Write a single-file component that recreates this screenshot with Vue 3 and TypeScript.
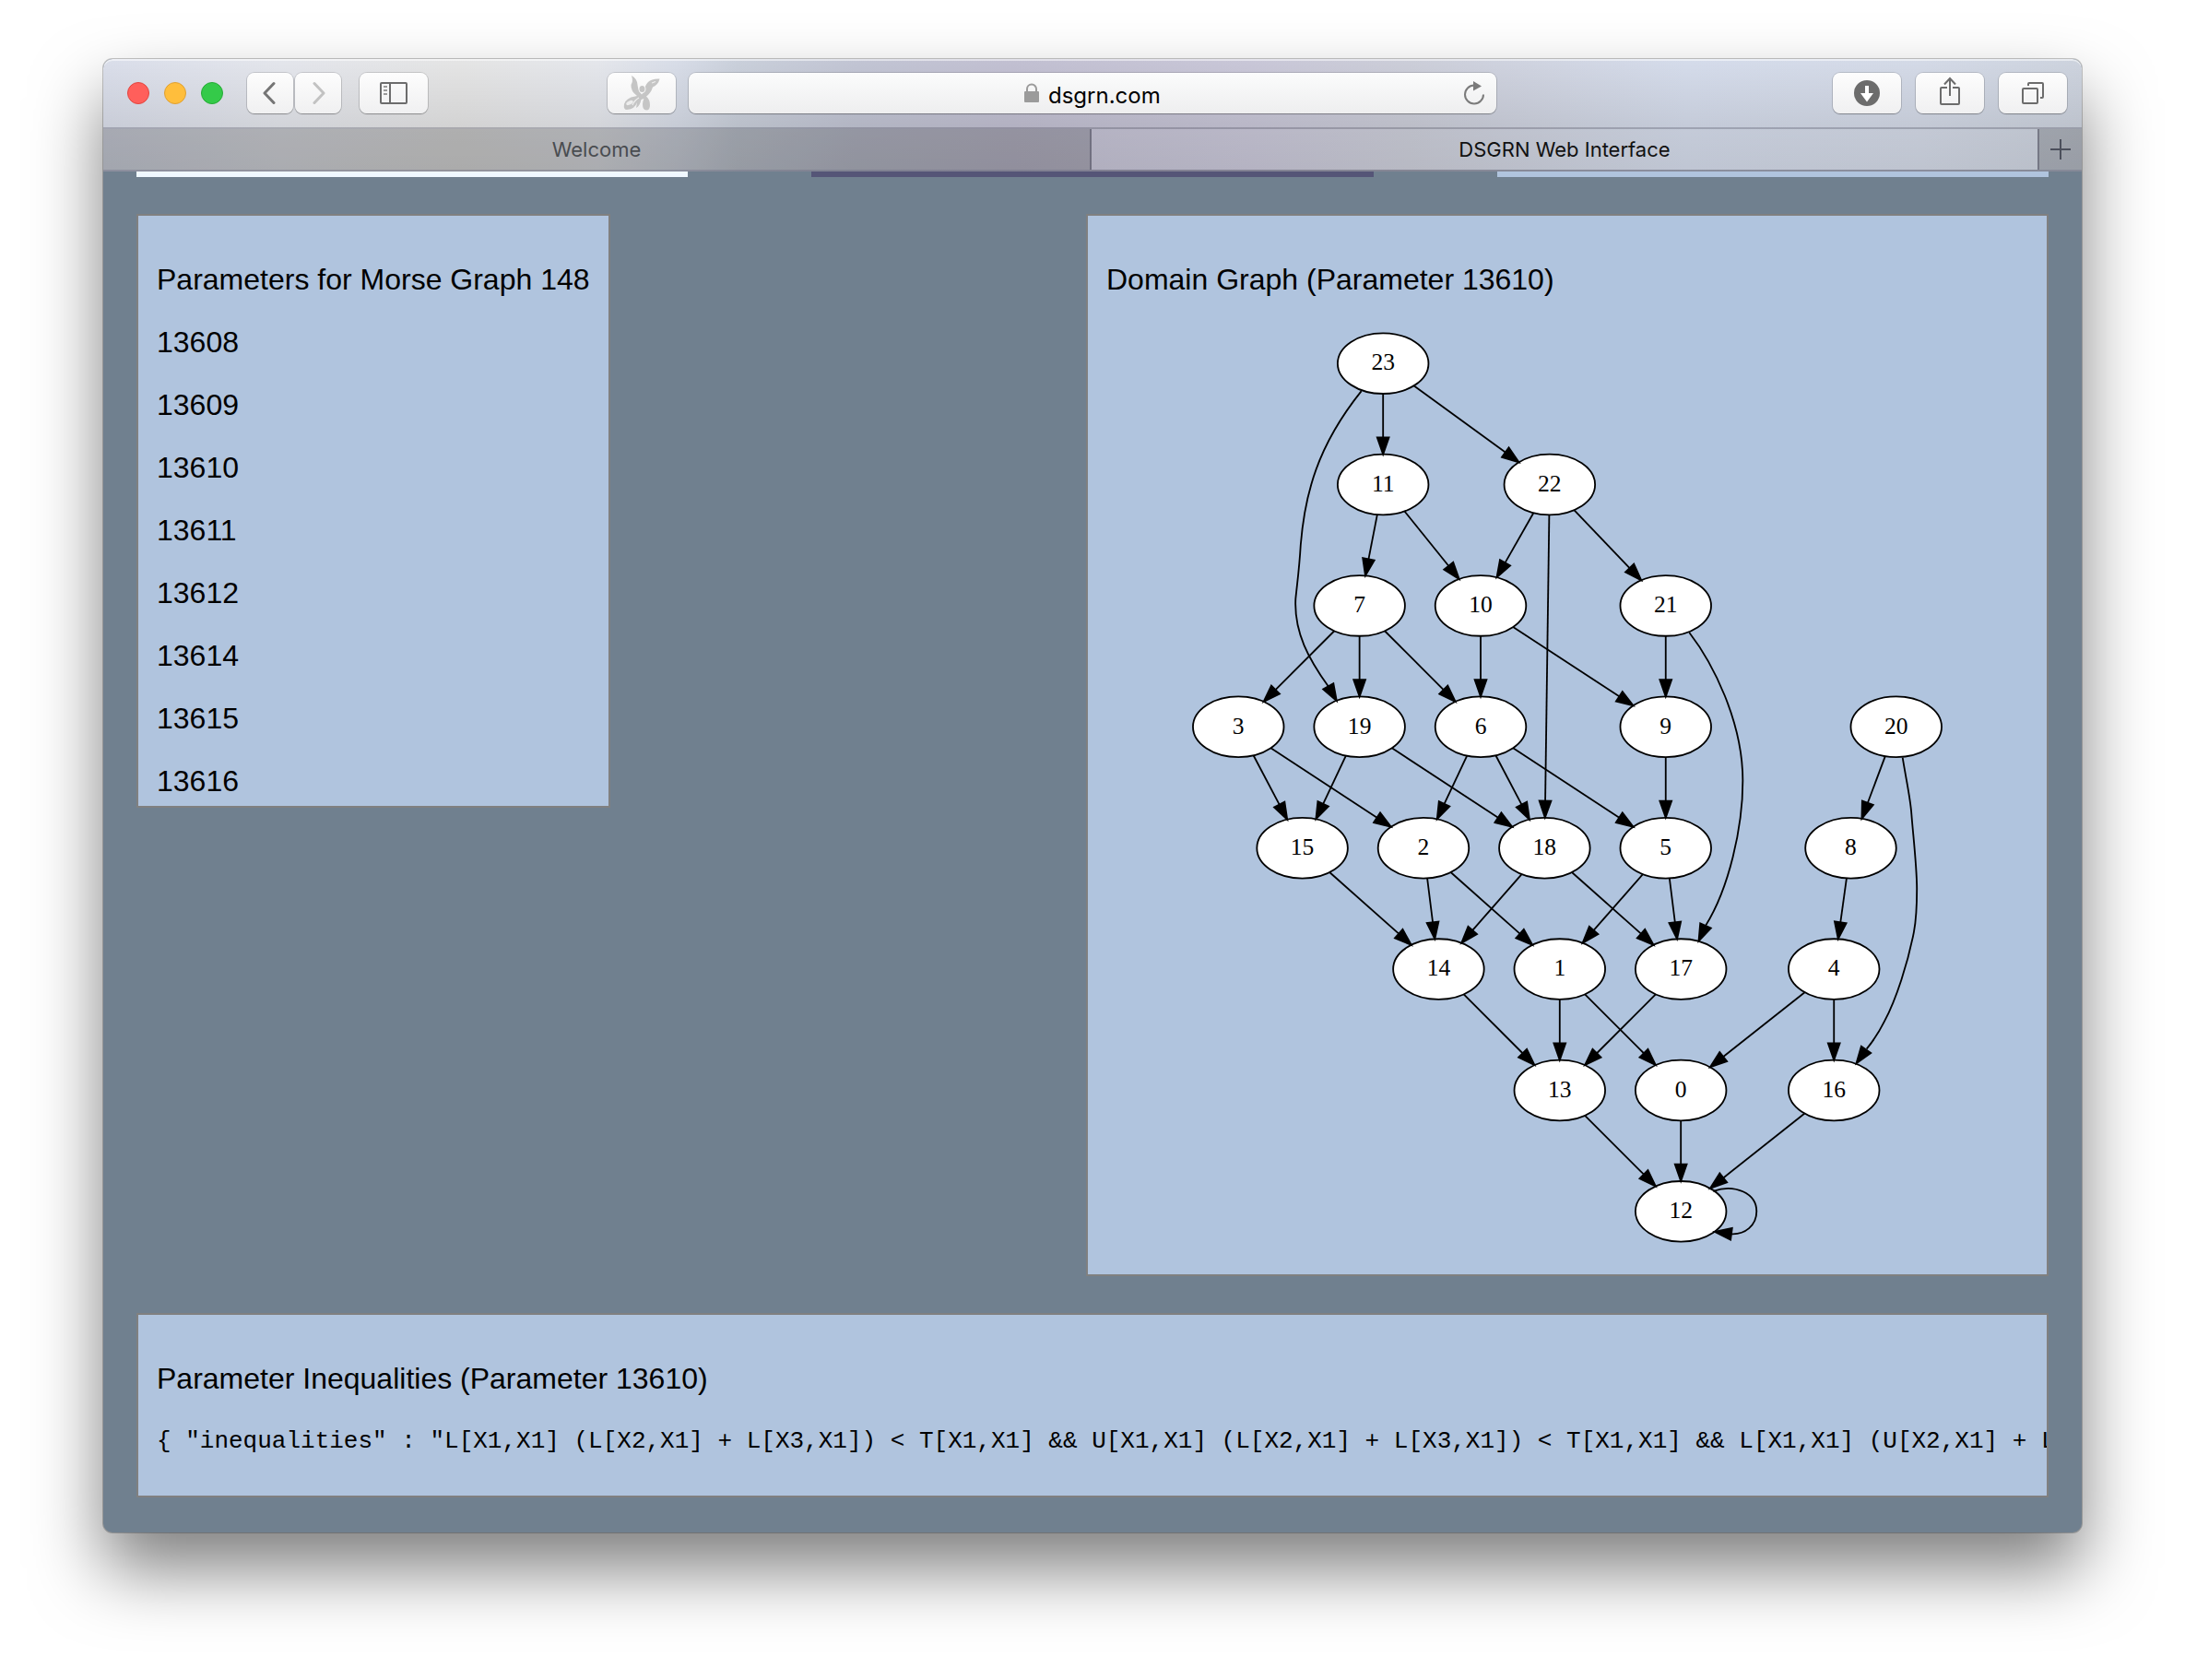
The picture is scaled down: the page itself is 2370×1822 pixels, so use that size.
<script setup lang="ts">
import { ref } from 'vue'

interface GraphNode {
  id: number
  x: number
  y: number
}

interface CurvedEdge {
  path: string
  base: [number, number]
  tip: [number, number]
}

const address = ref('dsgrn.com')
const parameters: number[] = [13608, 13609, 13610, 13611, 13612, 13614, 13615, 13616]
const inequalities =
  '{ "inequalities" : "L[X1,X1] (L[X2,X1] + L[X3,X1]) < T[X1,X1] && U[X1,X1] (L[X2,X1] + L[X3,X1]) < T[X1,X1] && L[X1,X1] (U[X2,X1] + L[X3,X1]) < T[X1,X1]'

const RX = 27
const RY = 18

/* Nodes by rank, each as [label, x]. */
const ranks: [number, number][][] = [
  [[23, 113]],
  [[11, 113], [22, 212]],
  [[7, 99], [10, 171], [21, 281]],
  [[3, 27], [19, 99], [6, 171], [9, 281], [20, 418]],
  [[15, 65], [2, 137], [18, 209], [5, 281], [8, 391]],
  [[14, 146], [1, 218], [17, 290], [4, 381]],
  [[13, 218], [0, 290], [16, 381]],
  [[12, 290]],
]

const nodes: GraphNode[] = ranks.flatMap((rank, row) =>
  rank.map(([id, x]) => ({ id, x, y: 22 + row * 72 })),
)
const byId = new Map<number, GraphNode>(nodes.map((n) => [n.id, n]))

const links: [number, number][] = [
  [23, 11], [23, 22], [11, 7], [11, 10], [22, 10], [22, 18], [22, 21],
  [7, 3], [7, 19], [7, 6], [10, 6], [10, 9], [21, 9],
  [3, 15], [3, 2], [19, 15], [19, 18], [6, 2], [6, 18], [6, 5], [9, 5], [20, 8],
  [15, 14], [2, 14], [2, 1], [18, 14], [18, 17], [5, 1], [5, 17], [8, 4],
  [14, 13], [1, 13], [1, 0], [17, 13], [4, 0], [4, 16],
  [13, 12], [0, 12], [16, 12],
]

function arrowHead(base: [number, number], tip: [number, number]): string {
  const dx = tip[0] - base[0]
  const dy = tip[1] - base[1]
  const len = Math.hypot(dx, dy)
  const ux = dx / len
  const uy = dy / len
  const bx = tip[0] - ux * 10
  const by = tip[1] - uy * 10
  return `${bx - uy * 3.5},${by + ux * 3.5} ${tip[0]},${tip[1]} ${bx + uy * 3.5},${by - ux * 3.5}`
}

/* Straight edges run centre to centre and are cut at both ellipses. */
const straight = links.map(([from, to]) => {
  const a = byId.get(from)!
  const b = byId.get(to)!
  const dx = b.x - a.x
  const dy = b.y - a.y
  const t = 1 / Math.hypot(dx / RX, dy / RY)
  const len = Math.hypot(dx, dy)
  const start: [number, number] = [a.x + dx * t, a.y + dy * t]
  const tip: [number, number] = [b.x - dx * t, b.y - dy * t]
  const base: [number, number] = [tip[0] - (dx / len) * 10, tip[1] - (dy / len) * 10]
  return { path: `M${start} L${base}`, head: arrowHead(base, tip) }
})

const curves: CurvedEdge[] = [
  {
    path: 'M100.1,38.4 C82,61 74.5,79 70.3,94 C67.2,104.5 65,118 64,130 C63.2,144 62,152 61,162 C60,182 69,198 80.5,214',
    base: [80.5, 214],
    tip: [85.4, 222.6],
  },
  {
    path: 'M295,181.9 C309,200 326.8,235 326.8,270 C326.8,298 318.5,334 304.8,356',
    base: [304.8, 356],
    tip: [300.6, 365.3],
  },
  {
    path: 'M421.8,256.3 C424,270 426.4,280 427.1,290 C428,302 430.2,320 430.3,334 C430.3,346 430,352 428.5,360 C425,378 418,400 411,413 C408,419 404.5,424.5 400.4,429.4',
    base: [400.4, 429.4],
    tip: [394.3, 438],
  },
  {
    path: 'M309.2,513.9 C322,509.5 335,515 335,526 C335,534.5 328,539.8 320,539.4',
    base: [320, 539.4],
    tip: [310.1, 538.1],
  },
]

const edges = [
  ...straight,
  ...curves.map((c) => ({ path: c.path, head: arrowHead(c.base, c.tip) })),
]
</script>

<template>
  <div class="desktop">
    <div class="window">
      <header class="chrome">
        <div class="toolbar">
          <div class="side left">
            <div class="lights">
              <button class="light close" aria-label="Close"></button>
              <button class="light minimise" aria-label="Minimise"></button>
              <button class="light full" aria-label="Full screen"></button>
            </div>
            <div class="history">
              <button class="tool narrow" aria-label="Back">
                <svg width="16" height="26" viewBox="0 0 16 26"><path d="M12 2.500L2 13l10 10.500" fill="none" stroke="#757575" stroke-width="3" stroke-linecap="round" stroke-linejoin="round" /></svg>
              </button>
              <button class="tool narrow" aria-label="Forward" disabled>
                <svg width="16" height="26" viewBox="0 0 16 26"><path d="M4 2.500L14 13L4 23.500" fill="none" stroke="#c2c2c2" stroke-width="3" stroke-linecap="round" stroke-linejoin="round" /></svg>
              </button>
            </div>
            <button class="tool sidebar" aria-label="Show sidebar">
              <svg width="30" height="24" viewBox="0 0 30 24" fill="none" stroke="#6c6c6c">
                <rect x="1" y="1" width="28" height="22" rx="1" stroke-width="2" />
                <path d="M11 1v22" stroke-width="2" />
                <path d="M4 5h4M4 9h4M4 13h4" stroke="#9a9a9a" stroke-width="2" />
              </svg>
            </button>
            <button class="tool favourite" aria-label="Favourite">
              <svg width="40" height="40" viewBox="0 0 40 40" fill="#c5c5c5">
                <path d="M9 1Q15 4 15.500 11Q16 17 20 21.500L23 18Q23 12 27 8Q31 4 39.500 4.500Q38 11 32 13.500Q30 20 25 23.500Q29 27 29 33Q29 38.500 25 38.500Q21 38 21 32Q21 29 22.500 26L19.500 27Q18 34 14 36L15 30Q13 37 4 38Q0 38 1 32Q3 25 13 23.500L15 23Q8 18 8.500 11Q11 7 9 1Z" />
                <ellipse cx="20.500" cy="15.500" rx="4" ry="4.500" fill="#f8f8f8" />
                <ellipse cx="20.500" cy="15.500" rx="3" ry="3.500" />
                <ellipse cx="7" cy="30.500" rx="4" ry="2" transform="rotate(-25 7 30.500)" fill="#ededed" />
                <path d="M17 25Q12 28 10 33M31 9l4-1.500" fill="none" stroke="#efefef" stroke-width="1.200" />
              </svg>
            </button>
          </div>

          <div class="address">
            <label class="location">
              <svg width="16" height="22" viewBox="0 0 16 22">
                <path d="M3 10V6.500a5 5 0 0 1 10 0V10" fill="none" stroke="#9b9b9b" stroke-width="2" />
                <rect y="9" width="16" height="12" rx="1" fill="#9b9b9b" />
              </svg>
              <input v-model="address" type="text" aria-label="Address" spellcheck="false" />
            </label>
            <button class="reload" aria-label="Reload">
              <svg width="24" height="28" viewBox="0 0 24 28">
                <path d="M12 5.500A10 10 0 1 0 22 15.500" fill="none" stroke="#7b7b7b" stroke-width="2" />
                <path d="M11 1L20 6.500L11 11.500Z" fill="#7b7b7b" />
              </svg>
            </button>
          </div>

          <div class="side right">
            <button class="tool" aria-label="Downloads">
              <svg width="28" height="28" viewBox="0 0 28 28">
                <circle cx="14" cy="14" r="14" fill="#6c6c6c" />
                <path d="M12 6h4v8h5l-7 9.500L7 14h5Z" fill="#fff" />
              </svg>
            </button>
            <button class="tool" aria-label="Share">
              <svg class="share" width="24" height="32" viewBox="0 0 24 32" fill="none" stroke="#6c6c6c" stroke-width="2">
                <path d="M9 12H3a1 1 0 0 0-1 1v16a1 1 0 0 0 1 1h18a1 1 0 0 0 1-1V13a1 1 0 0 0-1-1h-6" />
                <path d="M12 21V2M6 8.500L12 2l6 6.500" />
              </svg>
            </button>
            <button class="tool" aria-label="Show all tabs">
              <svg width="26" height="26" viewBox="0 0 26 26" fill="none" stroke="#6c6c6c" stroke-width="2">
                <rect x="2" y="8" width="16" height="16" rx="1" />
                <path d="M8 5V3a1 1 0 0 1 1-1h14a1 1 0 0 1 1 1v14a1 1 0 0 1-1 1h-2" />
              </svg>
            </button>
          </div>
        </div>

        <nav class="tabs">
          <button class="tab back">Welcome</button>
          <button class="tab active">DSGRN Web Interface</button>
          <button class="plus" aria-label="New tab">
            <svg width="22" height="22" viewBox="0 0 22 22"><path d="M11 0v22M0 11h22" stroke="#4b4f5b" stroke-width="2" /></svg>
          </button>
        </nav>
      </header>

      <main class="page">
        <div class="strips">
          <div class="strip white"></div>
          <div class="strip purple"></div>
          <div class="strip blue"></div>
        </div>

        <div class="columns">
          <section class="card parameters">
            <h2>Parameters for Morse Graph 148</h2>
            <ul>
              <li v-for="p in parameters" :key="p">{{ p }}</li>
            </ul>
          </section>

          <section class="card domain">
            <h2>Domain Graph (Parameter 13610)</h2>
            <svg class="graph" viewBox="0 0 453 548" role="img" aria-label="Domain graph">
              <g transform="translate(4 0)">
                <g v-for="n in nodes" :key="n.id">
                  <ellipse :cx="n.x" :cy="n.y" :rx="RX" :ry="RY" fill="#fff" stroke="#000" />
                  <text :x="n.x" :y="n.y + 4" text-anchor="middle">{{ n.id }}</text>
                </g>
                <g v-for="(e, i) in edges" :key="i" stroke="#000">
                  <path :d="e.path" fill="none" />
                  <polygon :points="e.head" />
                </g>
              </g>
            </svg>
          </section>
        </div>

        <section class="card inequalities">
          <h2>Parameter Inequalities (Parameter 13610)</h2>
          <pre>{{ inequalities }}</pre>
        </section>
      </main>
    </div>
  </div>
</template>

<style>
body {
  margin: 0;
  background: #fff;
}
</style>

<style scoped>
* {
  box-sizing: border-box;
}

button,
input {
  margin: 0;
  padding: 0;
  border: 0;
  background: none;
  font: inherit;
  color: inherit;
}

svg {
  display: block;
}

.desktop {
  padding: 64px 112px 160px;
  overflow: hidden;
}

.window {
  border-radius: 10px;
  background: #70808f;
  box-shadow:
    0 0 0 1px rgba(0, 0, 0, 0.22),
    0 40px 76px rgba(0, 0, 0, 0.5);
}

.chrome {
  border-radius: 10px 10px 0 0;
  overflow: hidden;
  font-family: Inter, "Liberation Sans", sans-serif;
  box-shadow: inset 0 2px 0 rgba(255, 255, 255, 0.5);
  background:
    linear-gradient(to bottom, rgba(0, 0, 0, 0), rgba(0, 0, 0, 0.08) 60%, rgba(0, 0, 0, 0.1)),
    linear-gradient(
      to right,
      #dadeea 0%,
      #e4e6ec 9%,
      #e5e5e5 18%,
      #e5e7ec 25%,
      #d8dde8 29%,
      #cad0db 32%,
      #c2c5d4 38%,
      #c2c0d2 46%,
      #c9c7d8 58%,
      #ccced9 66%,
      #d5dceb 80%,
      #d4dae7 92%,
      #cdd3de 100%
    );
}

.toolbar {
  display: grid;
  grid-template-columns: 1fr 41.4% 1fr;
  align-items: center;
  height: 76px;
  padding: 0 16px;
  border-bottom: 2px solid rgba(60, 60, 80, 0.28);
}

.side {
  display: flex;
  align-items: center;
}

.left {
  padding-left: 10px;
}

.right {
  justify-content: flex-end;
  gap: 16px;
}

.lights {
  display: flex;
  gap: 16px;
  margin-right: 26px;
}

.light {
  width: 24px;
  height: 24px;
  border-radius: 50%;
}

.close {
  background: #ff5f5b;
  border: 1px solid #e2453f;
}

.minimise {
  background: #ffbe3c;
  border: 1px solid #dfa033;
}

.full {
  background: #34ca49;
  border: 1px solid #25ab35;
}

.history {
  display: flex;
  gap: 2px;
  margin-right: 20px;
}

.tool {
  display: flex;
  align-items: center;
  justify-content: center;
  width: 74px;
  height: 44px;
  border-radius: 8px;
  background: linear-gradient(to bottom, #fdfdfd, #f0f0f1);
  box-shadow:
    0 0 0 1px rgba(0, 0, 0, 0.13),
    0 1px 1px rgba(0, 0, 0, 0.25);
}

.narrow {
  width: 50px;
}

.favourite {
  margin: 0 14px 0 auto;
}

.share {
  margin-bottom: 4px;
}

.address {
  display: grid;
  grid-template-columns: 1fr auto 1fr;
  align-items: center;
  height: 44px;
  padding: 0 12px;
  border-radius: 8px;
  background: linear-gradient(to bottom, #fbfcfc, #eeeeef);
  box-shadow:
    0 0 0 1px rgba(0, 0, 0, 0.13),
    0 1px 1px rgba(0, 0, 0, 0.25);
}

.location {
  display: flex;
  grid-column: 2;
  align-items: center;
  gap: 10px;
}

.location input {
  width: 122px;
  height: 36px;
  padding-top: 4px;
  font-size: 24px;
  line-height: 32px;
  color: #000;
  outline: 0;
}

.reload {
  justify-self: end;
}

.tabs {
  display: flex;
  height: 46px;
  border-bottom: 2px solid rgba(60, 60, 80, 0.4);
  font-size: 22px;
  line-height: 44px;
}

.tab {
  flex: 1 1 0;
  text-align: center;
}

.back {
  flex-basis: 46px;
  border-right: 2px solid rgba(60, 60, 80, 0.4);
  background: rgba(0, 0, 0, 0.17);
  color: #494c50;
}

.active {
  color: #111;
}

.plus {
  display: flex;
  flex: 0 0 48px;
  align-items: center;
  justify-content: center;
  border-left: 2px solid rgba(60, 60, 80, 0.4);
  background: rgba(0, 0, 0, 0.17);
}

.page {
  padding: 0 36px 38px;
  font-family: "Liberation Sans", Arial, sans-serif;
  font-size: 32px;
  line-height: 34px;
  color: #000;
}

.strips {
  display: flex;
  gap: 134px;
  margin-bottom: 40px;
}

.strip {
  flex: 1 1 0;
  height: 6px;
}

.white {
  background: #f0f8ff;
}

.purple {
  flex-basis: 12px;
  background: #555577;
}

.blue {
  background: #b0c4de;
}

.columns {
  display: flex;
  align-items: flex-start;
  justify-content: space-between;
  margin-bottom: 40px;
}

.card {
  padding: 20px;
  border: 2px solid #808080;
  background: #b0c4de;
  overflow: hidden;
}

.card h2 {
  margin: 32px 0 34px;
  font-size: 32px;
  font-weight: 400;
}

.parameters {
  padding-bottom: 10px;
}

.parameters ul {
  display: flex;
  flex-direction: column;
  gap: 34px;
  margin: 0;
  padding: 0;
  list-style: none;
}

.domain {
  width: calc(50% + 7px);
  padding-bottom: 28px;
}

.graph {
  width: 100%;
  aspect-ratio: 1;
  font-family: "Liberation Serif", "Times New Roman", serif;
  font-size: 14px;
}

.inequalities pre {
  margin: 0 0 22px;
  font-family: "Liberation Mono", "Courier New", monospace;
  font-size: 26px;
  line-height: 34px;
}
</style>
